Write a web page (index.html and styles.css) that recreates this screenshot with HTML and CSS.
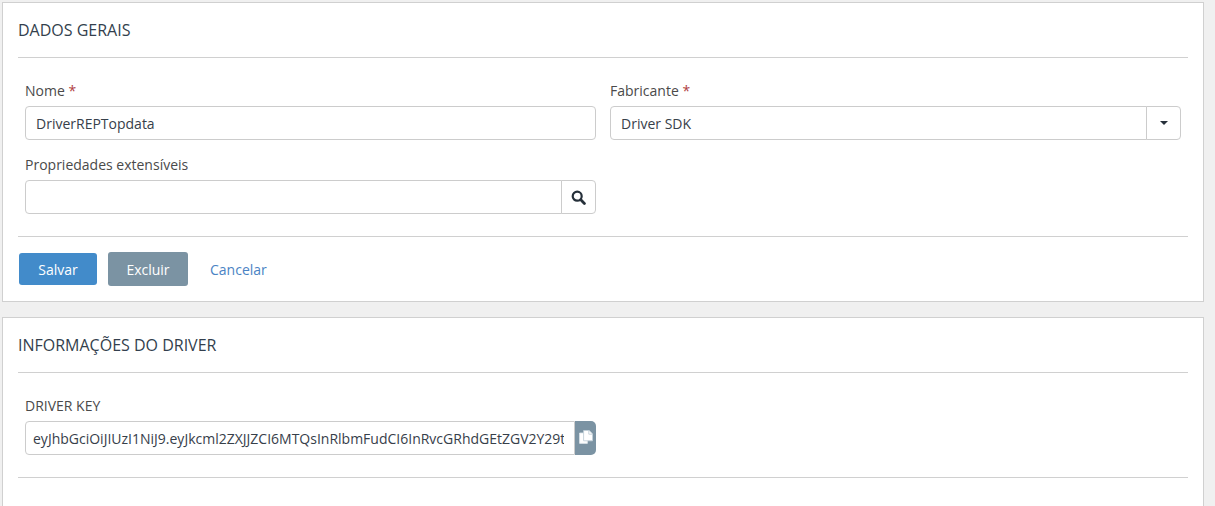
FILE: index.html
```html
<!DOCTYPE html>
<html lang="pt">
<head>
<meta charset="utf-8">
<title>Driver</title>
<link rel="stylesheet" href="styles.css">
</head>
<body>
<section class="panel panel-general">
  <h2 class="panel-title">DADOS GERAIS</h2>
  <div class="form-grid">
    <div class="field">
      <label class="label">Nome <span class="req">*</span></label>
      <input class="control" type="text" value="DriverREPTopdata">
    </div>
    <div class="field">
      <label class="label">Fabricante <span class="req">*</span></label>
      <div class="group">
        <input class="control control-joined" type="text" value="Driver SDK">
        <span class="addon"><span class="caret"></span></span>
      </div>
    </div>
    <div class="field">
      <label class="label">Propriedades extensíveis</label>
      <div class="group">
        <input class="control control-joined" type="text" value="">
        <span class="addon">
          <svg class="icon-search" viewBox="0 0 15 15" width="15" height="15" aria-hidden="true"><circle cx="6.2" cy="6.2" r="4.5" fill="none" stroke="#26303a" stroke-width="2.2"/><path d="M9.8 9.8 13.4 13.4" stroke="#26303a" stroke-width="2.8" stroke-linecap="round"/></svg>
        </span>
      </div>
    </div>
  </div>
  <div class="actions">
    <button class="btn btn-primary" type="button">Salvar</button>
    <button class="btn btn-muted" type="button">Excluir</button>
    <a class="link" href="#">Cancelar</a>
  </div>
</section>
<section class="panel panel-info">
  <h2 class="panel-title">INFORMAÇÕES DO DRIVER</h2>
  <div class="form-grid">
    <div class="field">
      <label class="label">DRIVER KEY</label>
      <div class="group">
        <input class="control control-joined control-key" type="text" value="eyJhbGciOiJIUzI1NiJ9.eyJkcml2ZXJJZCI6MTQsInRlbmFudCI6InRvcGRhdGEtZGV2Y29tLWRldiJ9">
        <span class="copy">
          <svg viewBox="0 0 14 14" width="14" height="14" aria-hidden="true"><path d="M.6 3H8.4V13.4H.6Z" fill="#fff" stroke="#dfe7ec" stroke-width=".8"/><path d="M4.6.5H10.2L13.5 3.8V10.8H4.6Z" fill="#fff" stroke="#c3d0d9" stroke-width=".9" stroke-linejoin="round"/><path d="M9.8.8V4.2H13.2" fill="none" stroke="#c3d0d9" stroke-width=".9"/></svg>
        </span>
      </div>
    </div>
  </div>
  <div class="rule-end"></div>
</section>
</body>
</html>
```

FILE: styles.css
```css
* { box-sizing: border-box; }
html, body { height: 100%; }
body {
  margin: 0;
  display: flex;
  flex-direction: column;
  padding: 2px 11px 0 2px;
  background: #f0f0f0;
  font-family: "Open Sans", sans-serif;
  font-size: 14px;
  color: #37404a;
  overflow: hidden;
}
.panel {
  background: #fff;
  border: 1px solid #d0d0d0;
  padding: 0 15px;
}
.panel-general { flex: none; height: 300px; margin-bottom: 15px; }
.panel-info { flex: 1; min-height: 0; border-bottom: 0; }
.panel-title {
  margin: 0;
  height: 55px;
  padding: 16px 0 0;
  border-bottom: 1px solid #d0d0d0;
  font-size: 16px;
  font-weight: 400;
  line-height: 22px;
  color: #333f4d;
}
.form-grid {
  display: grid;
  grid-template-columns: 571px 571px;
  column-gap: 14px;
  row-gap: 15px;
  padding: 23px 7px 22px;
}
.field { display: flex; flex-direction: column; }
.label {
  height: 25px;
  line-height: 20px;
  color: #4a4a4a;
}
.req { color: #b0403f; }
.control {
  display: block;
  width: 100%;
  height: 34px;
  padding: 0 10px;
  border: 1px solid #ccc;
  border-radius: 4px;
  background: #fff;
  font: inherit;
  color: #37404a;
  outline: none;
}
.group { display: flex; height: 34px; }
.control-joined {
  flex: 1;
  min-width: 0;
  border-radius: 4px 0 0 4px;
}
.addon {
  flex: none;
  width: 35px;
  display: flex;
  align-items: center;
  justify-content: center;
  border: 1px solid #ccc;
  margin-left: -1px;
  border-radius: 0 4px 4px 0;
  background: #fff;
}
.caret {
  width: 0;
  height: 0;
  border-left: 4.5px solid transparent;
  border-right: 4.5px solid transparent;
  border-top: 4.5px solid #26303a;
}
.control-key { padding: 0 10px 0 7px; }
.copy {
  flex: none;
  width: 21px;
  display: flex;
  align-items: center;
  justify-content: center;
  padding-bottom: 2px;
  background: #7b93a3;
  border-radius: 0 5px 5px 0;
}
.actions {
  display: flex;
  align-items: center;
  height: 65px;
  border-top: 1px solid #d0d0d0;
  padding: 0 1px;
}
.btn {
  font: inherit;
  color: #fff;
  border: 0;
  border-radius: 3px;
  padding: 0;
}
.btn-primary { width: 78px; height: 32px; background: #428bca; margin-right: 11px; }
.btn-muted { width: 80px; height: 34px; background: #7b93a3; margin-right: 22px; }
.link { color: #4a83c4; text-decoration: none; }
.rule-end { border-top: 1px solid #d0d0d0; }
```
